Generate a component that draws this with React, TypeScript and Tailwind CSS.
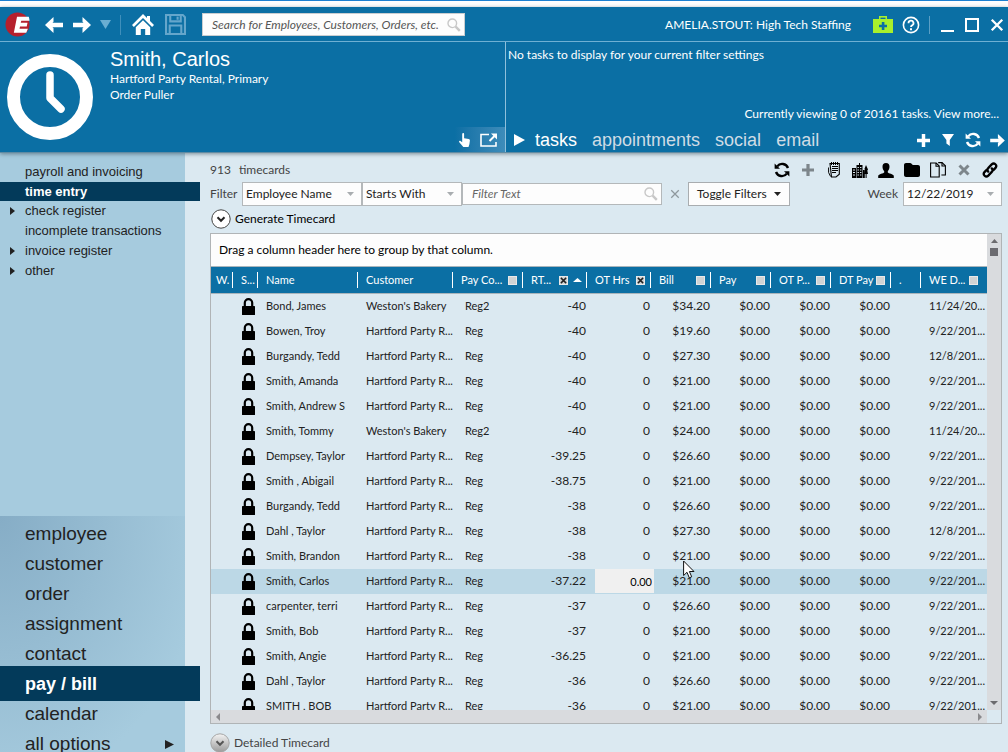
import React from "react";
import { FaFolder } from "react-icons/fa6";

type SvgProps = { className?: string };

function RefreshIcon({ className }: SvgProps) {
  return (
    <svg viewBox="0 0 16 16" className={className} fill="none" stroke="currentColor" strokeWidth="2.4">
      <path d="M14 6A6.200 6.200 0 0 0 3.200 4.400" />
      <path d="M2 10a6.200 6.200 0 0 0 10.800 1.600" />
      <path d="M.6 1.400v5.400H6z" fill="currentColor" stroke="none" />
      <path d="M15.400 14.600V9.200H10z" fill="currentColor" stroke="none" />
    </svg>
  );
}

function ArrowIcon({ flip, className }: SvgProps & { flip?: boolean }) {
  return (
    <svg viewBox="0 0 18 16" className={className} fill="currentColor">
      <path
        d={
          flip
            ? "M0 8L8.500 0v4.800L7.500 5.800H18v4.400H7.500l1 1V16z"
            : "M18 8L9.500 0v4.800l1 1H0v4.400h10.500l-1 1V16z"
        }
      />
    </svg>
  );
}

function PlusIcon({ className }: SvgProps) {
  return (
    <svg viewBox="0 0 12 12" className={className} fill="currentColor">
      <path d="M4.400 0h3.200v4.400H12v3.200H7.600V12H4.400V7.600H0V4.400h4.400z" />
    </svg>
  );
}

function HandIcon({ className }: SvgProps) {
  return (
    <svg viewBox="0 0 11 14" className={className} fill="currentColor">
      <path d="M3.200.9c0-1.200 1.900-1.200 1.900 0v4.300l4.600.9c.8.200 1.300.7 1.200 1.500l-.5 3.600-.9 2.800H4.300L.3 9.300c-.8-1 .3-1.900 1.200-1.300l1.700 1.200z" />
    </svg>
  );
}

function LockIcon({ className }: SvgProps) {
  return (
    <svg viewBox="0 0 13 17" className={className}>
      <path d="M2.800 9V4.800a3.700 3.700 0 0 1 7.400 0V9" fill="none" stroke="currentColor" strokeWidth="2.200" />
      <rect x="0" y="8" width="13" height="9" rx=".6" fill="currentColor" />
    </svg>
  );
}

function LinkIcon({ className }: SvgProps) {
  return (
    <svg viewBox="0 0 16 16" className={className} fill="none" stroke="currentColor" strokeWidth="2.300" strokeLinecap="round">
      <path d="M6.200 9.600c-1.100-1.200-1-2.500 0-3.500l3.500-3.700c2.500-2.400 6 .9 3.800 3.500l-1.900 2" />
      <path d="M9.800 6.400c1.100 1.200 1 2.500 0 3.500l-3.500 3.700c-2.500 2.400-6-.9-3.800-3.500l1.900-2" />
    </svg>
  );
}

function SearchIcon({ className }: SvgProps) {
  return (
    <svg viewBox="0 0 14 14" className={className} fill="none" stroke="currentColor">
      <circle cx="5.300" cy="5.300" r="4.300" strokeWidth="1.400" />
      <path d="M8.600 8.600l4.200 4.200" strokeWidth="2.400" />
    </svg>
  );
}

function HomeIcon({ className }: SvgProps) {
  return (
    <svg viewBox="0 0 22 22" className={className} fill="currentColor">
      <path d="M11 0L0 11l1.900 1.900L11 3.900l9.100 9L22 11l-4-4V2h-3v2z" />
      <path d="M11 6.200l-7.200 7.100V21h5v-6h4.400v6h5v-7.700z" />
    </svg>
  );
}

function SaveIcon({ className }: SvgProps) {
  return (
    <svg viewBox="0 0 20 20" className={className} fill="none" stroke="currentColor" strokeWidth="2">
      <path d="M1 1h16l2 2v16H1z" />
      <path d="M5 1v6h10V1" />
      <path d="M12 2.500v3" />
      <path d="M4.500 19v-8h11v8" />
    </svg>
  );
}

function LogoIcon({ className }: SvgProps) {
  return (
    <svg viewBox="0 0 26 26" className={className}>
      <circle cx="13" cy="13" r="12.500" fill="#b5202d" />
      <path d="M12.500 5h12.200a12.500 12.500 0 0 1 .8 4h-8.600l-.5 2.300h7l-.8 3.800h-7l-.5 2.400h8.700l-1.700 4H9.200z" fill="#fff" />
    </svg>
  );
}

function ClockIcon({ className }: SvgProps) {
  return (
    <svg viewBox="0 0 86 86" className={className} fill="none" stroke="#fff">
      <circle cx="43" cy="43" r="36.500" strokeWidth="13" />
      <path d="M43 21v23l11 11" strokeWidth="7.500" strokeLinecap="round" strokeLinejoin="round" />
    </svg>
  );
}

function KitIcon({ className }: SvgProps) {
  return (
    <svg viewBox="0 0 20 17" className={className}>
      <path d="M6 3V0h8v3h6v14H0V3z" fill="#a8f02c" />
      <path d="M7.500 3V1.600h5V3z" fill="#0b6fa4" />
      <path d="M8.800 6h2.600v2.800H14v2.500h-2.600V14H8.800v-2.700H6V8.800h2.800z" fill="#0b6fa4" />
    </svg>
  );
}

function HelpIcon({ className }: SvgProps) {
  return (
    <svg viewBox="0 0 18 18" className={className} fill="none" stroke="#fff" strokeWidth="1.600">
      <circle cx="9" cy="9" r="7.600" />
      <path d="M6.500 7.200a2.500 2.500 0 1 1 3.600 2.200c-.8.4-1.100.8-1.100 1.700" strokeWidth="1.800" />
      <path d="M9 12.300v1.900" strokeWidth="2" />
    </svg>
  );
}

function ExternalIcon({ className }: SvgProps) {
  return (
    <svg viewBox="0 0 18 14" className={className} fill="none" stroke="#fff" strokeWidth="1.600">
      <path d="M9 1.500H1V13h15V9" />
      <path d="M9.500 8l5-5" strokeWidth="2" />
      <path d="M11 .5h6v6z" fill="#fff" stroke="none" />
    </svg>
  );
}

function FunnelIcon({ className }: SvgProps) {
  return (
    <svg viewBox="0 0 12 12" className={className} fill="currentColor">
      <path d="M0 0h12L7.800 6V12L4.400 9.500V6z" />
    </svg>
  );
}

function NoteIcon({ className }: SvgProps) {
  return (
    <svg viewBox="0 0 12 16" className={className} fill="none" stroke="currentColor" strokeWidth="1.100">
      <path d="M2 1.500h9.300v10.800L8 15H3.500z" />
      <path d="M3.500 0v3M5.500 0v3M7.500 0v3M9.500 0v3" strokeWidth="1" />
      <path d="M4 4.500h6M4 6.500h6M4 8.500h6M4 10.500h4" strokeWidth="1" />
      <path d="M.6 5.500v5l2 4" strokeWidth="1" />
    </svg>
  );
}

function BuildingsIcon({ className }: SvgProps) {
  return (
    <svg viewBox="0 0 16 15" className={className}>
      <path d="M0 5h4v10H0zM4.500 2H7V0h1v2h2.500v13h-6zM11 7h1.800v8H11z" fill="currentColor" />
      <path d="M14 2l2 4.500-.7 1 .7 3.500h-1.400v4h-1v-4H12l1-4-.6-1z" fill="currentColor" />
      <path
        d="M1 7h2M1 9.500h2M1 12h2M5.500 4.500h1.400M8 4.500h1.400M5.500 7h1.400M8 7h1.400M5.500 9.500h1.400M8 9.500h1.400M5.500 12h1.400M8 12h1.400"
        stroke="#dbe9f1"
        strokeWidth="1.200"
      />
    </svg>
  );
}

function PagesIcon({ className }: SvgProps) {
  return (
    <svg viewBox="0 0 16 16" className={className} fill="none" stroke="currentColor" strokeWidth="1.100">
      <path d="M.6 1h5.600l3 3v11H.6z" />
      <path d="M6 1v3.200h3.200" />
      <path d="M8.200.6H12l3.400 3.200V13h-4" />
      <path d="M12 .6V4h3.400" />
    </svg>
  );
}

function XIcon({ className }: SvgProps) {
  return (
    <svg viewBox="0 0 12 12" className={className} fill="none" stroke="currentColor">
      <path d="M1.500 1.500l9 9M10.500 1.500l-9 9" />
    </svg>
  );
}

function PersonIcon({ className }: SvgProps) {
  return (
    <svg viewBox="0 0 16 15" className={className} fill="currentColor">
      <path d="M8 0c2.400 0 3.600 1.600 3.500 3.800 0 1.900-.7 3.400-1.700 4.400v1.300c.6.900 5.700 1.600 6 3.200V15H.2v-2.300c.3-1.600 5.400-2.300 6-3.200V8.200c-1-1-1.700-2.500-1.700-4.400C4.400 1.600 5.600 0 8 0z" />
    </svg>
  );
}

function ChevronCircle({ id, shaded }: { id: string; shaded?: boolean }) {
  return (
    <svg viewBox="0 0 20 20" className="size-5 shrink-0">
      <defs>
        <linearGradient id={id} x1="0" y1="0" x2="0" y2="1">
          <stop offset="0" stopColor={shaded ? "#f4f4f4" : "#fff"} />
          <stop offset="1" stopColor={shaded ? "#9a9a9a" : "#fff"} />
        </linearGradient>
      </defs>
      <circle cx="10" cy="10" r="9.200" fill={`url(#${id})`} stroke={shaded ? "#a5a5a5" : "#444"} />
      <path d="M6.500 8.300L10 11.800l3.500-3.500" fill="none" stroke={shaded ? "#555" : "#222"} strokeWidth="2" />
    </svg>
  );
}

function Triangle({ dir, className }: { dir: "up" | "down" | "left" | "right"; className?: string }) {
  const d = {
    up: "M0 10L5 0l5 10z",
    down: "M0 0h10L5 10z",
    left: "M10 0v10L0 5z",
    right: "M0 0l10 5-10 5z",
  }[dir];
  return (
    <svg viewBox="0 0 10 10" preserveAspectRatio="none" className={className} fill="currentColor">
      <path d={d} />
    </svg>
  );
}

const subNav = [
  { label: "payroll and invoicing" },
  { label: "time entry", active: true },
  { label: "check register", more: true },
  { label: "incomplete transactions" },
  { label: "invoice register", more: true },
  { label: "other", more: true },
];

const mainNav = ["employee", "customer", "order", "assignment", "contact", "pay / bill", "calendar", "all options"];

type Row = [name: string, customer: string, code: string, hours: string, bill: string, date: string];

const HPR = "Hartford Party R...";
const WB = "Weston's Bakery";

const rows: Row[] = [
  ["Bond, James", WB, "Reg2", "-40", "$34.20", "11/24/20..."],
  ["Bowen, Troy", HPR, "Reg", "-40", "$19.60", "9/22/201..."],
  ["Burgandy, Tedd", HPR, "Reg", "-40", "$27.30", "12/8/201..."],
  ["Smith, Amanda", HPR, "Reg", "-40", "$21.00", "9/22/201..."],
  ["Smith, Andrew S", HPR, "Reg", "-40", "$21.00", "9/22/201..."],
  ["Smith, Tommy", WB, "Reg2", "-40", "$24.00", "11/24/20..."],
  ["Dempsey, Taylor", HPR, "Reg", "-39.25", "$26.60", "9/22/201..."],
  ["Smith , Abigail", HPR, "Reg", "-38.75", "$21.00", "9/22/201..."],
  ["Burgandy, Tedd", HPR, "Reg", "-38", "$26.60", "9/22/201..."],
  ["Dahl , Taylor", HPR, "Reg", "-38", "$27.30", "12/8/201..."],
  ["Smith, Brandon", HPR, "Reg", "-38", "$21.00", "9/22/201..."],
  ["Smith, Carlos", HPR, "Reg", "-37.22", "$21.00", "9/22/201..."],
  ["carpenter, terri", HPR, "Reg", "-37", "$26.60", "9/22/201..."],
  ["Smith, Bob", HPR, "Reg", "-37", "$21.00", "9/22/201..."],
  ["Smith, Angie", HPR, "Reg", "-36.25", "$21.00", "9/22/201..."],
  ["Dahl , Taylor", HPR, "Reg", "-36", "$26.60", "9/22/201..."],
  ["SMITH , BOB", HPR, "Reg", "-36", "$21.00", "9/22/201..."],
];

const SELECTED = 11;

type Column = { label: string; width: string; pad: string; mark?: "box" | "x"; sorted?: boolean };

const columns: Column[] = [
  { label: "W.", width: "w-[22px]", pad: "pl-[5px]" },
  { label: "S...", width: "w-[25px]", pad: "pl-2" },
  { label: "Name", width: "", pad: "pl-2" },
  { label: "Customer", width: "w-[95px]", pad: "pl-2" },
  { label: "Pay Co...", width: "w-[70px]", pad: "pl-2 pr-[5px]", mark: "box" },
  { label: "RT...", width: "w-16", pad: "pl-2 pr-1", mark: "x", sorted: true },
  { label: "OT Hrs", width: "w-16", pad: "pl-2 pr-[5px]", mark: "x" },
  { label: "Bill", width: "w-[60px]", pad: "pl-2 pr-[5px]", mark: "box" },
  { label: "Pay", width: "w-[60px]", pad: "pl-2 pr-[5px]", mark: "box" },
  { label: "OT P...", width: "w-[60px]", pad: "pl-2 pr-[5px]", mark: "box" },
  { label: "DT Pay", width: "w-[60px]", pad: "pl-2 pr-[5px]", mark: "box" },
  { label: ".", width: "w-[30px]", pad: "pl-2" },
  { label: "WE D...", width: "w-[66px]", pad: "pl-2 pr-[9px]", mark: "box" },
];

function HeaderMark({ kind, label }: { kind: "box" | "x"; label: string }) {
  return (
    <button
      type="button"
      aria-label={`Summary for ${label}`}
      className="flex size-[9px] shrink-0 items-center justify-center border border-[#e8e8e8] bg-[#cfd3d4] text-[#222]"
    >
      {kind === "x" && <XIcon className="size-[7px] stroke-[2.500]" />}
    </button>
  );
}

function SelectBox({ id, label, options, className }: { id: string; label: string; options: string[]; className: string }) {
  return (
    <div className={`relative h-6 ${className}`}>
      <select
        id={id}
        aria-label={label}
        className="h-full w-full appearance-none border border-[#b4b8ba] bg-[#fdfdfd] pl-[3px] pr-5 text-[#222] outline-none"
      >
        {options.map((o) => (
          <option key={o}>{o}</option>
        ))}
      </select>
      <Triangle dir="down" className="pointer-events-none absolute right-2 top-[10px] h-1 w-[7px] text-[#a9adb0]" />
    </div>
  );
}

function TitleBar() {
  return (
    <div className="flex h-[34px] shrink-0 items-center pl-[5px] pr-1 pt-px">
      <LogoIcon className="size-[25px]" />
      <button type="button" aria-label="Back" className="ml-[15px]">
        <ArrowIcon flip className="h-4 w-[18px]" />
      </button>
      <button type="button" aria-label="Forward" className="ml-[10px]">
        <ArrowIcon className="h-4 w-[18px]" />
      </button>
      <button type="button" aria-label="History" className="ml-[9px] text-[#6aaed2]">
        <Triangle dir="down" className="h-[9px] w-[11px]" />
      </button>
      <span className="ml-[9px] h-5 w-px bg-[#3f8fbb]" />
      <button type="button" aria-label="Home" className="ml-[11px]">
        <HomeIcon className="size-[22px]" />
      </button>
      <button type="button" aria-label="Save" className="ml-[11px] text-[#65a6cb]">
        <SaveIcon className="size-[21px]" />
      </button>
      <div className="ml-4 flex h-[23px] w-[263px] items-center border border-[#c9cdd0] bg-[#fdfdfd] pr-[3px]">
        <input
          type="text"
          aria-label="Search"
          placeholder="Search for Employees, Customers, Orders, etc."
          className="min-w-0 flex-1 pl-[9px] text-xs italic text-[#444] outline-none placeholder:text-[#555]"
        />
        <SearchIcon className="size-[14px] text-[#c8c8c8]" />
      </div>
      <span className="ml-auto text-xs">AMELIA.STOUT: High Tech Staffing</span>
      <button type="button" aria-label="Support kit" className="ml-[22px]">
        <KitIcon className="h-[17px] w-5" />
      </button>
      <button type="button" aria-label="Help" className="ml-[9px]">
        <HelpIcon className="size-[18px]" />
      </button>
      <span className="ml-[9px] h-[18px] w-px bg-[#5b9fc5]" />
      <button type="button" aria-label="Minimize" className="ml-[11px] h-[14px] w-[13px] border-b-2 border-white" />
      <button type="button" aria-label="Maximize" className="ml-[11px] size-[14px] border-2 border-white" />
      <button type="button" aria-label="Close" className="ml-[11px]">
        <XIcon className="size-[14px] stroke-2" />
      </button>
    </div>
  );
}

function HeaderPanel() {
  return (
    <div className="grid h-[110px] grid-cols-[506fr_502fr]">
      <div className="relative flex border-r border-[#8fc0db] pl-[7px] pt-3">
        <ClockIcon className="size-[86px] shrink-0" />
        <div className="-mt-[6px] ml-[17px]">
          <h1 className="pb-px font-['Liberation_Sans',Arial,sans-serif] text-xl leading-[22px]">Smith, Carlos</h1>
          <p className="text-xs leading-4">Hartford Party Rental, Primary</p>
          <p className="text-xs leading-4">Order Puller</p>
        </div>
        <div className="absolute bottom-0 right-0 flex h-[25px] w-[50px] items-center justify-between bg-gradient-to-r from-[#0b6fa4] to-[#3d8cba] pl-1 pr-[7px]">
          <button type="button" aria-label="Select record">
            <HandIcon className="h-[14px] w-[11px]" />
          </button>
          <button type="button" aria-label="Open in new window">
            <ExternalIcon className="h-[14px] w-[18px]" />
          </button>
        </div>
      </div>
      <div className="flex flex-col pl-[2px]">
        <p className="pt-[5px] text-xs leading-4">No tasks to display for your current filter settings</p>
        <a href="#tasks" className="ml-auto mt-auto pb-[6px] pr-[9px] text-xs leading-4">
          Currently viewing 0 of 20161 tasks. View more...
        </a>
        <div className="flex h-6 items-center pl-[6px] pr-[3px] font-['Liberation_Sans',Arial,sans-serif]">
          <Triangle dir="right" className="h-3 w-[11px]" />
          <nav className="ml-[10px] flex gap-[15px] text-lg leading-6 text-[#cfdce4]">
            <a href="#tasks" className="text-white">
              tasks
            </a>
            <a href="#appointments">appointments</a>
            <a href="#social">social</a>
            <a href="#email">email</a>
          </nav>
          <div className="ml-auto flex items-center gap-[9px]">
            <button type="button" aria-label="Add task" className="px-px">
              <PlusIcon className="size-[13px]" />
            </button>
            <button type="button" aria-label="Filter tasks" className="px-[2px]">
              <FunnelIcon className="size-3" />
            </button>
            <button type="button" aria-label="Refresh tasks">
              <RefreshIcon className="size-4" />
            </button>
            <button type="button" aria-label="Next">
              <ArrowIcon className="h-[13px] w-[15px]" />
            </button>
          </div>
        </div>
      </div>
    </div>
  );
}

function Sidebar() {
  return (
    <aside className="relative z-10 flex w-[185px] shrink-0 flex-col bg-[#a6cbde] font-['Liberation_Sans',Arial,sans-serif] text-[#222]">
      <nav className="flex flex-1 flex-col pt-[9px] text-[13px]">
        {subNav.map((item) => (
          <a
            key={item.label}
            href="#nav"
            className={
              item.active
                ? "flex h-[19px] w-[200px] items-center bg-[#033a5a] pl-[25px] font-bold text-white"
                : "flex h-5 items-center pl-[10px]"
            }
          >
            {!item.active && (
              <span className="w-[15px]">{item.more && <Triangle dir="right" className="h-2 w-[5px]" />}</span>
            )}
            {item.label}
          </a>
        ))}
      </nav>
      <nav className="flex h-[236px] w-[200px] flex-col overflow-hidden text-[19px] leading-[30px]">
        <div className="w-[185px] bg-[radial-gradient(ellipse_at_0_0,#86adc6_0%,#a6cbde_80%)] pt-[3px]">
          {mainNav.map((label) =>
            label === "pay / bill" ? (
              <a
                key={label}
                href="#nav"
                className="-mb-[2px] -mt-[3px] flex h-[35px] w-[200px] items-center bg-[#033a5a] pl-[25px] text-lg font-bold text-white"
              >
                {label}
              </a>
            ) : (
              <a key={label} href="#nav" className="flex h-[30px] items-center justify-between pl-[25px] pr-[11px]">
                {label}
                {label === "all options" && <Triangle dir="right" className="size-[9px]" />}
              </a>
            ),
          )}
        </div>
      </nav>
    </aside>
  );
}

function Toolbar() {
  return (
    <div className="flex items-center gap-[10px] text-black">
      <button type="button" aria-label="Refresh">
        <RefreshIcon className="size-4" />
      </button>
      <button type="button" aria-label="Add" className="px-[2px] text-[#7d868b]">
        <PlusIcon className="size-3" />
      </button>
      <button type="button" aria-label="Notes" className="px-[2px]">
        <NoteIcon className="h-4 w-3" />
      </button>
      <button type="button" aria-label="Company">
        <BuildingsIcon className="h-[15px] w-4" />
      </button>
      <button type="button" aria-label="Employee">
        <PersonIcon className="h-[15px] w-4" />
      </button>
      <button type="button" aria-label="Folder">
        <FaFolder className="size-4" />
      </button>
      <button type="button" aria-label="Copy">
        <PagesIcon className="size-4" />
      </button>
      <button type="button" aria-label="Delete" className="px-[2px] text-[#7d868b]">
        <XIcon className="size-3 stroke-[3]" />
      </button>
      <button type="button" aria-label="Link">
        <LinkIcon className="size-4" />
      </button>
    </div>
  );
}

function FilterBar() {
  return (
    <div className="flex items-center text-xs">
      <label htmlFor="filter-field" className="w-8 text-[#444]">
        Filter
      </label>
      <SelectBox id="filter-field" label="Filter" options={["Employee Name", "Customer"]} className="w-[120px]" />
      <SelectBox id="filter-op" label="Comparison" options={["Starts With", "Contains"]} className="w-[100px]" />
      <div className="flex h-[22px] w-[200px] items-center border border-[#b4b8ba] bg-[#fdfdfd] pr-[3px]">
        <input
          type="text"
          aria-label="Filter text"
          placeholder="Filter Text"
          className="min-w-0 flex-1 pl-[9px] italic outline-none placeholder:text-[#666]"
        />
        <SearchIcon className="size-[14px] text-[#c8c8c8]" />
      </div>
      <button type="button" aria-label="Clear filter" className="mx-2 text-[#8e989d]">
        <XIcon className="size-[10px] stroke-[1.500]" />
      </button>
      <button
        type="button"
        className="flex h-6 w-[102px] items-center justify-between border border-[#a9adb0] bg-[#fdfdfd] px-2 text-[#222]"
      >
        Toggle Filters
        <Triangle dir="down" className="h-1 w-[7px]" />
      </button>
      <label htmlFor="week" className="ml-auto pr-[5px] text-[#444]">
        Week
      </label>
      <SelectBox id="week" label="Week" options={["12/22/2019"]} className="w-[99px]" />
    </div>
  );
}

function Grid() {
  return (
    <div className="relative flex min-h-0 flex-1 flex-col border border-[#b0b4b6]">
      <div className="flex min-h-0 flex-1">
        <div className="flex min-w-0 flex-1 flex-col overflow-hidden">
          <div className="h-8 shrink-0 bg-[#fdfdfd] pl-2 text-xs leading-8 text-black">
            Drag a column header here to group by that column.
          </div>
          <table className="w-full table-fixed border-collapse whitespace-nowrap text-[11px] text-[#222]">
            <colgroup>
              {columns.map((c) => (
                <col key={c.label} className={c.width} />
              ))}
            </colgroup>
            <thead>
              <tr className="h-[27px] border-y border-[#a9b5bc] bg-[#0b6fa4] text-left text-white">
                {columns.map((c, i) => (
                  <th key={c.label} className="p-0 font-normal">
                    <div
                      className={`flex h-4 items-center leading-4 ${c.pad} ${
                        i < columns.length - 1 ? "border-r border-white" : ""
                      }`}
                    >
                      <span className="flex-1">{c.label}</span>
                      {c.mark && <HeaderMark kind={c.mark} label={c.label} />}
                      {c.sorted && <Triangle dir="up" className="ml-[5px] h-1 w-[9px]" />}
                    </div>
                  </th>
                ))}
              </tr>
            </thead>
            <tbody>
              {rows.map(([name, customer, code, hours, bill, date], i) => (
                <tr key={i} className={i === SELECTED ? "h-[25px] bg-[#bcd8e6]" : "h-[25px]"}>
                  <td className="p-0" />
                  <td className="p-0 pl-[9px]">
                    <LockIcon className="h-[17px] w-[13px] text-black" />
                  </td>
                  <td className="p-0 pl-2">{name}</td>
                  <td className="p-0 pl-2">{customer}</td>
                  <td className="p-0 pl-3">{code}</td>
                  <td className="p-0 pr-px text-right text-xs">{hours}</td>
                  <td className="p-0 pr-px text-right text-xs">
                    {i === SELECTED ? (
                      <input
                        aria-label="OT hours"
                        defaultValue="0.00"
                        className="-mr-1 block h-6 w-[59px] translate-x-2 bg-[#f0f0f0] pr-[2px] text-right text-[11px] text-black outline-none"
                      />
                    ) : (
                      "0"
                    )}
                  </td>
                  <td className="p-0 pr-px text-right text-xs">{bill}</td>
                  <td className="p-0 pr-px text-right text-xs">$0.00</td>
                  <td className="p-0 pr-px text-right text-xs">$0.00</td>
                  <td className="p-0 pr-px text-right text-xs">$0.00</td>
                  <td className="p-0" />
                  <td className="p-0 pl-2">{date}</td>
                </tr>
              ))}
            </tbody>
          </table>
        </div>
        <div className="flex w-[14px] shrink-0 flex-col items-center justify-between bg-[#d9dbde] py-[5px] text-[#6b6b6e]">
          <div className="flex flex-col items-center gap-[5px]">
            <Triangle dir="up" className="h-1 w-[7px]" />
            <span className="size-2 bg-[#6b6b70]" />
          </div>
          <Triangle dir="down" className="h-1 w-2" />
        </div>
      </div>
      <div className="mr-[14px] flex h-[13px] shrink-0 items-center justify-between bg-[#d9dbde] px-[5px] text-[#8a8a8d]">
        <Triangle dir="left" className="h-2 w-1" />
        <Triangle dir="right" className="h-2 w-1" />
      </div>
      <svg viewBox="0 0 12 19" className="absolute left-[472px] top-[326px] h-[19px] w-3">
        <path
          d="M.6 1v14.500l3.400-3.200 2.300 5.500 2.400-1-2.300-5.300h4.600z"
          fill="#fff"
          stroke="#111"
          strokeWidth="1"
        />
      </svg>
    </div>
  );
}

export default function App() {
  return (
    <div className="flex h-screen flex-col overflow-hidden bg-[#dbe9f1] font-['Lato','Open_Sans',sans-serif]">
      <div className="h-[7px] shrink-0 border-t border-[#1c7fd0] bg-white" />
      <header className="relative z-20 shrink-0 border-b border-[#5f8ba3] bg-[#0b6fa4] text-white shadow-[0_1px_4px_rgba(60,80,90,0.600)]">
        <TitleBar />
        <div className="h-px bg-[#6fb0d3]" />
        <HeaderPanel />
      </header>
      <div className="flex min-h-0 flex-1">
        <Sidebar />
        <main className="flex min-w-0 flex-1 flex-col pl-[25px] pr-[6px]">
          <div className="flex h-[29px] items-center justify-between pr-1 pt-[5px] text-xs text-[#444]">
            <p className="flex gap-2">
              <span>913</span>
              <span>timecards</span>
            </p>
            <Toolbar />
          </div>
          <FilterBar />
          <button type="button" className="flex h-[27px] shrink-0 items-center gap-1 pb-[2px] pl-px text-xs text-black">
            <ChevronCircle id="generate-fill" />
            Generate Timecard
          </button>
          <Grid />
          <button type="button" className="flex h-7 shrink-0 items-center gap-1 pt-[10px] text-xs text-[#444]">
            <ChevronCircle id="detailed-fill" shaded />
            Detailed Timecard
          </button>
        </main>
      </div>
    </div>
  );
}
